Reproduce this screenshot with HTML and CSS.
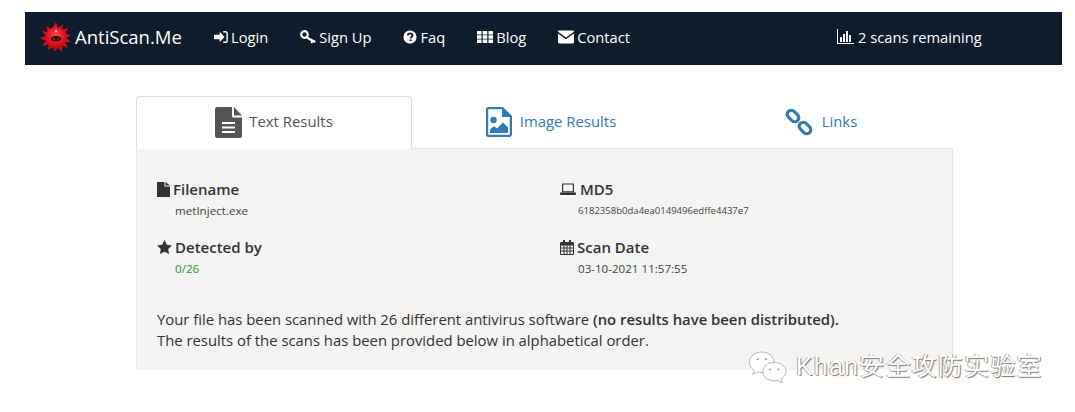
FILE: index.html
```html
<!DOCTYPE html>
<html lang="en">
<head>
<meta charset="utf-8">
<title>AntiScan.Me</title>
<link rel="stylesheet" href="styles.css">
</head>
<body>
<nav class="navbar">
  <a class="brand" href="#">
    <svg class="virus" viewBox="0 0 32 32" width="32" height="32">
      <defs><radialGradient id="vg" cx="48%" cy="35%" r="65%"><stop offset="0" stop-color="#ff4a4f"/><stop offset=".6" stop-color="#ea0f1d"/><stop offset="1" stop-color="#a90a14"/></radialGradient></defs>
      <path fill="#d8101c" d="M16 0l2 6 5-4-1 6 6-2-3 6 6 1-5 3 5 4-6 0 3 6-6-3 0 7-4-5-3 5-1-6-6 4 1-6-7 2 4-5-6-3 6-2-4-5 6 1-2-6 6 3z"/>
      <circle cx="16" cy="16" r="10.8" fill="url(#vg)"/>
      <ellipse cx="16" cy="16.800" rx="5.200" ry="2.700" fill="#2a0a0c"/>
      <path d="M13 17h2M17.500 17h1.500" stroke="#8a7070" stroke-width="1"/>
      <circle cx="16" cy="9" r="1.300" fill="#ffa5a5"/>
    </svg>
    <span>AntiScan.Me</span>
  </a>
  <ul class="nav-links">
    <li><a href="#"><svg class="ni" viewBox="0 0 16 16"><path d="M0 5.500h6.500V2L12 8l-5.500 6v-3.500H0z" fill="#fff"/><path d="M10.500 2h2.700A1.800 1.800 0 0 1 15 3.800v8.400a1.800 1.800 0 0 1-1.800 1.800h-2.700" fill="none" stroke="#fff" stroke-width="1.600"/></svg>Login</a></li>
    <li><a href="#"><svg class="ni key" viewBox="0 0 16 14"><circle cx="4.500" cy="4.500" r="3.300" fill="none" stroke="#fff" stroke-width="2.200"/><path d="M6.800 6.300 15.800 11l-1 2-1.800-.8-.8 1.400-1.600-.8.500-1.500L6 8.300z" fill="#fff"/></svg>Sign Up</a></li>
    <li><a href="#"><svg class="ni" viewBox="0 0 16 16"><circle cx="8" cy="8" r="7.500" fill="#fff"/><path d="M5.300 6.200C5.600 4.500 6.800 3.800 8.100 3.800c1.600 0 2.800.9 2.800 2.400 0 2-2.300 1.900-2.300 3.500" fill="none" stroke="#0f1c2b" stroke-width="1.900"/><rect x="7.500" y="10.800" width="2.200" height="2" fill="#0f1c2b"/></svg>Faq</a></li>
    <li><a href="#"><svg class="ni grid" viewBox="0 0 16 14"><path fill="#fff" d="M0 1h4.500v3.500H0zM5.700 1h4.600v3.500H5.700zM11.500 1H16v3.500h-4.500zM0 5.300h4.500v3.500H0zM5.700 5.300h4.600v3.500H5.700zM11.500 5.300H16v3.500h-4.500zM0 9.600h4.500v3.500H0zM5.700 9.600h4.600v3.500H5.700zM11.500 9.600H16v3.500h-4.500z"/></svg>Blog</a></li>
    <li><a href="#"><svg class="ni mail" viewBox="0 0 16 13"><path fill="#fff" d="M1.200 0h13.600c.7 0 1.200.5 1.200 1.200L8 7 0 1.200C0 .5.500 0 1.200 0zM0 3l8 5.800L16 3v8.800c0 .7-.5 1.200-1.200 1.200H1.200C.5 13 0 12.500 0 11.800z"/></svg>Contact</a></li>
  </ul>
  <div class="scans"><svg class="ni chart" viewBox="0 0 17 15"><path fill="#fff" d="M0 0h1v14h16v1H0zM3 8h2v5H3zM6 5h2v8H6zM9 2h2v11H9zM12 6h2v7h-2z"/></svg>2 scans remaining</div>
</nav>

<main class="content">
  <div class="tabs">
    <a class="tab active" href="#">
      <svg class="ti" width="28" height="31" viewBox="0 0 28 31"><path fill="#555" d="M2 0h15v9a1.500 1.500 0 0 0 1.500 1.500H27V29a2 2 0 0 1-2 2H2a2 2 0 0 1-2-2V2a2 2 0 0 1 2-2z"/><path fill="#555" d="M19 0l8 8.500h-8z"/><path fill="#fff" d="M7 15h13v2H7zM7 19.500h13v2H7zM7 24h13v2H7z"/></svg>
      <span>Text Results</span>
    </a>
    <a class="tab tab-image" href="#">
      <svg class="ti" width="26" height="30" viewBox="0 0 26 30"><path fill="none" stroke="#337ab7" stroke-width="2.200" d="M2.500 1.100h14l8.400 8.400v17.400a2 2 0 0 1-2 2H2.500a1.400 1.400 0 0 1-1.400-1.400V2.500a1.400 1.400 0 0 1 1.400-1.400z"/><path fill="#337ab7" d="M16 1l9 9h-9z"/><circle cx="7.500" cy="13" r="3.200" fill="#337ab7"/><path fill="#337ab7" d="M4 26v-3.500l4-3.500 3 2.500 6-6 5 5V26z"/></svg>
      <span>Image Results</span>
    </a>
    <a class="tab tab-links" href="#">
      <svg class="ti" width="28" height="28" viewBox="0 0 28 28"><g fill="none" stroke="#337ab7" stroke-width="3.200"><rect x="-6.500" y="-4" width="13" height="8" rx="4" transform="translate(8 8) rotate(45)"/><rect x="-6.500" y="-4" width="13" height="8" rx="4" transform="translate(20 20) rotate(45)"/></g></svg>
      <span>Links</span>
    </a>
  </div>
  <section class="panel">
    <div class="facts">
      <div class="fact">
        <h4><svg class="hi" width="13" height="15" viewBox="0 0 13 15"><path fill="#333" d="M0 0h7.500v4.500H13V15H0zM8.500 0 13 3.600H8.500z"/></svg>Filename</h4>
        <p>metInject.exe</p>
      </div>
      <div class="fact">
        <h4><svg class="hi" width="16" height="12" viewBox="0 0 16 12"><path fill="none" stroke="#333" stroke-width="1.200" d="M2.600 1h10.800v7.800H2.600z"/><path fill="#333" d="M0 9.500h16V11a1 1 0 0 1-1 1H1a1 1 0 0 1-1-1z"/></svg><span class="md5">MD5</span></h4>
        <p class="hash">6182358b0da4ea0149496edffe4437e7</p>
      </div>
      <div class="fact">
        <h4><svg class="hi" width="15" height="14" viewBox="0 0 15 14"><path fill="#333" d="M7.500 0l2.300 4.700 5.200.7-3.800 3.600.9 5.100-4.600-2.400-4.600 2.400.9-5.100L0 5.400l5.200-.7z"/></svg>Detected by</h4>
        <p class="ok">0/26</p>
      </div>
      <div class="fact">
        <h4><svg class="hi cal" width="14" height="15" viewBox="0 0 14 15"><path fill="#333" fill-rule="evenodd" d="M1 2h2V0h2v2h4V0h2v2h2a1 1 0 0 1 1 1v11a1 1 0 0 1-1 1H1a1 1 0 0 1-1-1V3a1 1 0 0 1 1-1zM1 5.500v2h2.500v-2zm3.500 0v2H6.500v-2zm3 0v2h2v-2zm3 0v2H13v-2zM1 8.500v2h2.500v-2zm3.500 0v2H6.500v-2zm3 0v2h2v-2zm3 0v2H13v-2zM1 11.500V14h2.500v-2.500zm3.500 0V14H6.500v-2.500zm3 0V14h2v-2.500zm3 0V14H13v-2.500z"/></svg>Scan Date</h4>
        <p>03-10-2021 11:57:55</p>
      </div>
    </div>
    <p class="summary">Your file has been scanned with 26 different antivirus software <strong>(no results have been distributed).</strong><br>The results of the scans has been provided below in alphabetical order.</p>
  </section>
</main>

<div class="watermark">
  <svg width="40" height="35" viewBox="0 0 38 34"><g fill="#fff" stroke="#aaa" stroke-width=".8"><path d="M13 1C6 1 1 5.500 1 11c0 3.200 1.700 5.900 4.500 7.800L4 23l5-2.600c1.200.3 2.500.5 4 .5 6.500 0 12-4.500 12-10S19.500 1 13 1z"/><path d="M25 11c-6 0-11 3.900-11 9s5 9 11 9c1.200 0 2.400-.2 3.500-.5L33 31l-1.200-4c2.900-1.700 4.700-4.300 4.700-7 0-5.100-5.500-9-11.500-9z"/></g><g fill="#999"><circle cx="9" cy="8" r="1"/><circle cx="17" cy="8" r="1"/><circle cx="21" cy="18" r=".9"/><circle cx="29" cy="18" r=".9"/></g></svg>
  <span>Khan安全攻防实验室</span>
</div>
</body>
</html>
```
FILE: styles.css
```css
* { box-sizing: border-box; }
html, body { margin: 0; padding: 0; }
body {
  height: 412px;
  overflow: hidden;
  background: #fff;
  padding-top: 12px;
  font-family: "Open Sans", "Noto Sans", sans-serif;
  color: #333;
  position: relative;
}
a { text-decoration: none; }
.navbar {
  margin: 0 13px 0 25px;
  height: 53px;
  background: #0f1c2b;
  color: #fff;
  display: flex;
  align-items: center;
  padding: 0 0 1px 15px;
  font-size: 14.7px;
}
.navbar a { color: #fff; }
.navbar span, .nav-links a, .scans { line-height: 20px; }
.brand { display: flex; align-items: center; font-size: 18.5px; width: 174px; }
.brand span { margin-bottom: 2px; }
.virus { margin-right: 3px; flex: none; }
.nav-links { display: flex; list-style: none; margin: 0 0 3px; padding: 0; width: 623px; }
.nav-links li { margin-right: 32px; }
.nav-links a { display: flex; align-items: center; }
.ni { width: 14px; height: 14px; margin-right: 3px; flex: none; }
.ni.key { width: 16px; }
.ni.grid { width: 16px; }
.ni.mail { width: 16px; }
.ni.chart { width: 17px; height: 15px; margin-right: 4px; }
.scans { display: flex; align-items: center; margin-bottom: 3px; }
.content { margin: 31px 122px 0 136px; }
.tabs { display: grid; grid-template-columns: 276px 276px 1fr; height: 53px; }
.tab {
  display: flex;
  align-items: center;
  justify-content: center;
  gap: 6px;
  font-size: 14.9px;
  color: #337ab7;
  border-bottom: 1px solid #e4e4e4;
}
.tab-image { gap: 8px; padding-left: 2px; }
.tab-links { gap: 9px; padding-left: 1px; }
.tab span { margin-bottom: 3px; }
.tab.active {
  color: #555;
  background: #fff;
  border: 1px solid #ddd;
  border-bottom: 1px solid #fff;
  border-radius: 4px 4px 0 0;
  position: relative;
  z-index: 1;
}
.panel {
  height: 221px;
  background: #f4f4f4;
  border-left: 1px solid #e6e6e6;
  border-right: 1px solid #e6e6e6;
  padding: 30px 20px 0;
  box-shadow: 0 -1px 1px #e4e4e4;
}
.facts { display: grid; grid-template-columns: 403px 1fr; row-gap: 18px; }
.fact h4 {
  margin: 0;
  display: flex;
  align-items: center;
  font-size: 15px;
  line-height: 20px;
  font-weight: 600;
  color: #333;
}
.hi { margin-right: 3px; flex: none; }
.md5 { margin-left: 1px; }
.fact p {
  margin: 3px 0 0 18px;
  font-size: 11.6px;
  line-height: 17px;
  color: #444;
}
.fact p.hash { font-size: 9.55px; }
.fact p.ok { color: #1f9a1f; }
.summary {
  margin: 32px 0 0;
  font-size: 14.85px;
  line-height: 21px;
  color: #333;
}
.summary strong { font-weight: 600; }
.watermark {
  position: absolute;
  left: 748px;
  top: 346px;
  display: flex;
  align-items: center;
  gap: 8px;
  color: #fff;
  font-family: "Liberation Sans", "Noto Sans CJK SC", sans-serif;
  font-size: 25px;
  letter-spacing: 1.2px;
  text-shadow: 1px 1px 1px #777, -1px 0 0 #aaa;
}
.watermark span { margin-bottom: 8px; }
```
